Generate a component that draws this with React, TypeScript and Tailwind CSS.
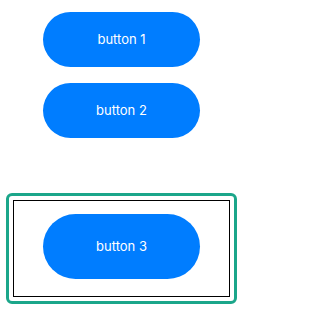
export default function App() {
  return (
    <div
      className="flex h-[318px] w-[243px] flex-col items-center bg-white pt-3"
      style={{ fontFamily: "Inter, 'Noto Sans', sans-serif" }}
    >
      <button className="flex h-[55px] w-[157px] items-center justify-center rounded-full bg-[#007dff] text-[13px] text-white">
        button 1
      </button>
      <button className="mt-4 flex h-[55px] w-[157px] items-center justify-center rounded-full bg-[#007dff] text-[13px] text-white">
        button 2
      </button>

      <div className="mt-[55px] w-[231px] rounded-[6px] border-[3px] border-[#1ba68a] p-1">
        <div className="flex h-[97px] flex-col items-center border border-black pt-[13px]">
          <button className="flex h-[65px] w-[157px] items-center justify-center rounded-full bg-[#007dff] text-[13px] text-white">
            button 3
          </button>
        </div>
      </div>
    </div>
  );
}
